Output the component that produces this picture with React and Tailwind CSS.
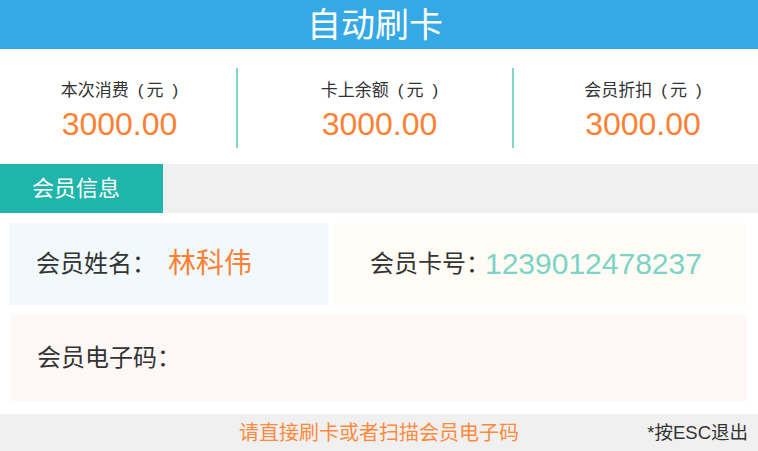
import React from "react";

const FONT = { fontFamily: '"Liberation Sans", "Noto Sans CJK SC", sans-serif' };

function Stat({ label, value, className }) {
  return (
    <div className={"flex flex-col items-center pt-[11px] " + className}>
      <div className="text-[17px] leading-[24px] text-[#333333] whitespace-nowrap">
        {label}
        <span className="ml-[9px] mr-[3px]">(</span>元<span className="ml-[9px]">)</span>
      </div>
      <div className="mt-[2px] text-[32px] leading-[38px] text-[#ff7f33]">{value}</div>
    </div>
  );
}

export default function App() {
  return (
    <div style={FONT} className="w-[758px] h-[451px] bg-white flex flex-col overflow-hidden">
      <div className="h-[49px] bg-[#35a9e5] flex items-center justify-center">
        <span className="text-[34px] leading-[40px] text-white pr-[8px]">自动刷卡</span>
      </div>

      <div className="h-[115px] pt-[19px] flex">
        <Stat label="本次消费" value="3000.00" className="w-[236px] h-[80px] pl-[3px]" />
        <div className="w-[2px] h-[80px] bg-[#7dd8c9]" />
        <Stat label="卡上余额" value="3000.00" className="w-[274px] h-[80px] pl-[9px]" />
        <div className="w-[2px] h-[80px] bg-[#7dd8c9]" />
        <Stat label="会员折扣" value="3000.00" className="flex-1 h-[80px] pl-[14px]" />
      </div>

      <div className="h-[49px] flex bg-[#f0f0f0]">
        <div className="w-[163px] bg-[#20b5aa] flex items-center justify-center">
          <span className="text-[22px] text-white leading-[30px] pr-[11px]">会员信息</span>
        </div>
      </div>

      <div className="mt-[10px] h-[82px] flex pl-[9px] pr-[11px] gap-[5px]">
        <div className="w-[319px] bg-[#f1f9fc] flex items-center pl-[27px]">
          <span className="text-[24px] leading-[32px] text-[#333333]">会员姓名：</span>
          <span className="ml-[12px] text-[28px] leading-[32px] text-[#ff7f33]">林科伟</span>
        </div>
        <div className="flex-1 bg-[#fffbf5] flex items-center pl-[37px]">
          <span className="text-[24px] leading-[32px] text-[#333333]">会员卡号：</span>
          <span className="ml-[-5px] text-[30px] leading-[32px] text-[#7bd4c6]">1239012478237</span>
        </div>
      </div>

      <div className="mt-[10px] h-[86px] ml-[11px] mr-[11px] bg-[#fdf7f6] flex items-center pl-[26px]">
        <span className="text-[24px] leading-[32px] text-[#333333]">会员电子码：</span>
      </div>

      <div className="mt-[13px] h-[37px] bg-[#f0f0f0] grid grid-cols-[1fr_auto_1fr] items-center">
        <div />
        <span className="text-[20px] leading-[28px] text-[#ff8a3d]">请直接刷卡或者扫描会员电子码</span>
        <span className="justify-self-end pr-[10px] text-[18.5px] leading-[24px] text-[#333333] whitespace-nowrap">*按ESC退出</span>
      </div>
    </div>
  );
}
